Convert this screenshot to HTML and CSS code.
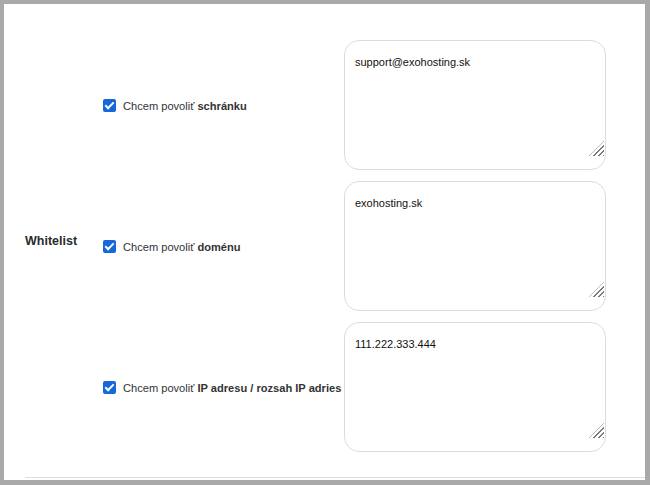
FILE: index.html
```html
<!DOCTYPE html>
<html lang="sk">
<head>
<meta charset="utf-8">
<title>Whitelist</title>
<link rel="stylesheet" href="styles.css">
</head>
<body>
<div class="panel">
  <div class="grid">
    <div class="title">Whitelist</div>

    <label class="opt r1"><span class="cb"></span><span>Chcem povoliť <b>schránku</b></span></label>
    <div class="ta r1"><textarea>support@exohosting.sk</textarea><span class="grip"></span></div>

    <label class="opt r2"><span class="cb"></span><span>Chcem povoliť <b>doménu</b></span></label>
    <div class="ta r2"><textarea>exohosting.sk</textarea><span class="grip"></span></div>

    <label class="opt r3"><span class="cb"></span><span>Chcem povoliť <b>IP adresu / rozsah IP adries</b></span></label>
    <div class="ta r3"><textarea>111.222.333.444</textarea><span class="grip"></span></div>
  </div>
</div>
</body>
</html>
```

FILE: styles.css
```css
html, body {
  margin: 0;
  padding: 0;
  background: #a9a9a9;
}
body {
  padding: 4px 5px 5px 4px;
  font-family: "Liberation Sans", Arial, sans-serif;
}
.panel {
  background: #fff;
  height: 476px;
  padding: 36px 0 0 21px;
  box-sizing: border-box;
}
.grid {
  display: grid;
  grid-template-columns: 78px 241px 262px 1fr;
  grid-template-rows: 130px 130px 130px;
  row-gap: 11px;
  padding-bottom: 25px;
  border-bottom: 1px solid #dedede;
}
.title {
  grid-column: 1;
  grid-row: 1 / 4;
  align-self: center;
  font-weight: bold;
  font-size: 12.5px;
  color: #2b2b2b;
  margin-top: -10px;
}
.opt {
  grid-column: 2;
  display: flex;
  align-items: center;
  gap: 7px;
  font-size: 11.1px;
  color: #333;
  white-space: nowrap;
  margin-top: 1px;
}
.opt b { color: #333; }
.r1 { grid-row: 1; }
.r2 { grid-row: 2; }
.r3 { grid-row: 3; }
.cb {
  width: 13px;
  height: 13px;
  border-radius: 2px;
  background: #1567dc;
  flex: none;
  position: relative;
}
.cb::after {
  content: "";
  position: absolute;
  left: 4px;
  top: 1px;
  width: 3px;
  height: 7px;
  border: solid #fff;
  border-width: 0 2px 2px 0;
  transform: rotate(45deg);
}
.ta {
  grid-column: 3;
  position: relative;
}
.ta textarea {
  display: block;
  width: 100%;
  height: 100%;
  box-sizing: border-box;
  border: 1px solid #dcdcdc;
  border-radius: 15px;
  padding: 15px 10px;
  font-family: "Liberation Sans", Arial, sans-serif;
  font-size: 11px;
  color: #111;
  resize: none;
  outline: none;
  margin: 0;
}
.grip {
  position: absolute;
  right: 2px;
  bottom: 14px;
  width: 15px;
  height: 15px;
  background: repeating-linear-gradient(135deg, transparent 0 2px, #7a7a7a 2px 3.6px);
  clip-path: polygon(100% 0, 100% 100%, 0 100%);
}
```
